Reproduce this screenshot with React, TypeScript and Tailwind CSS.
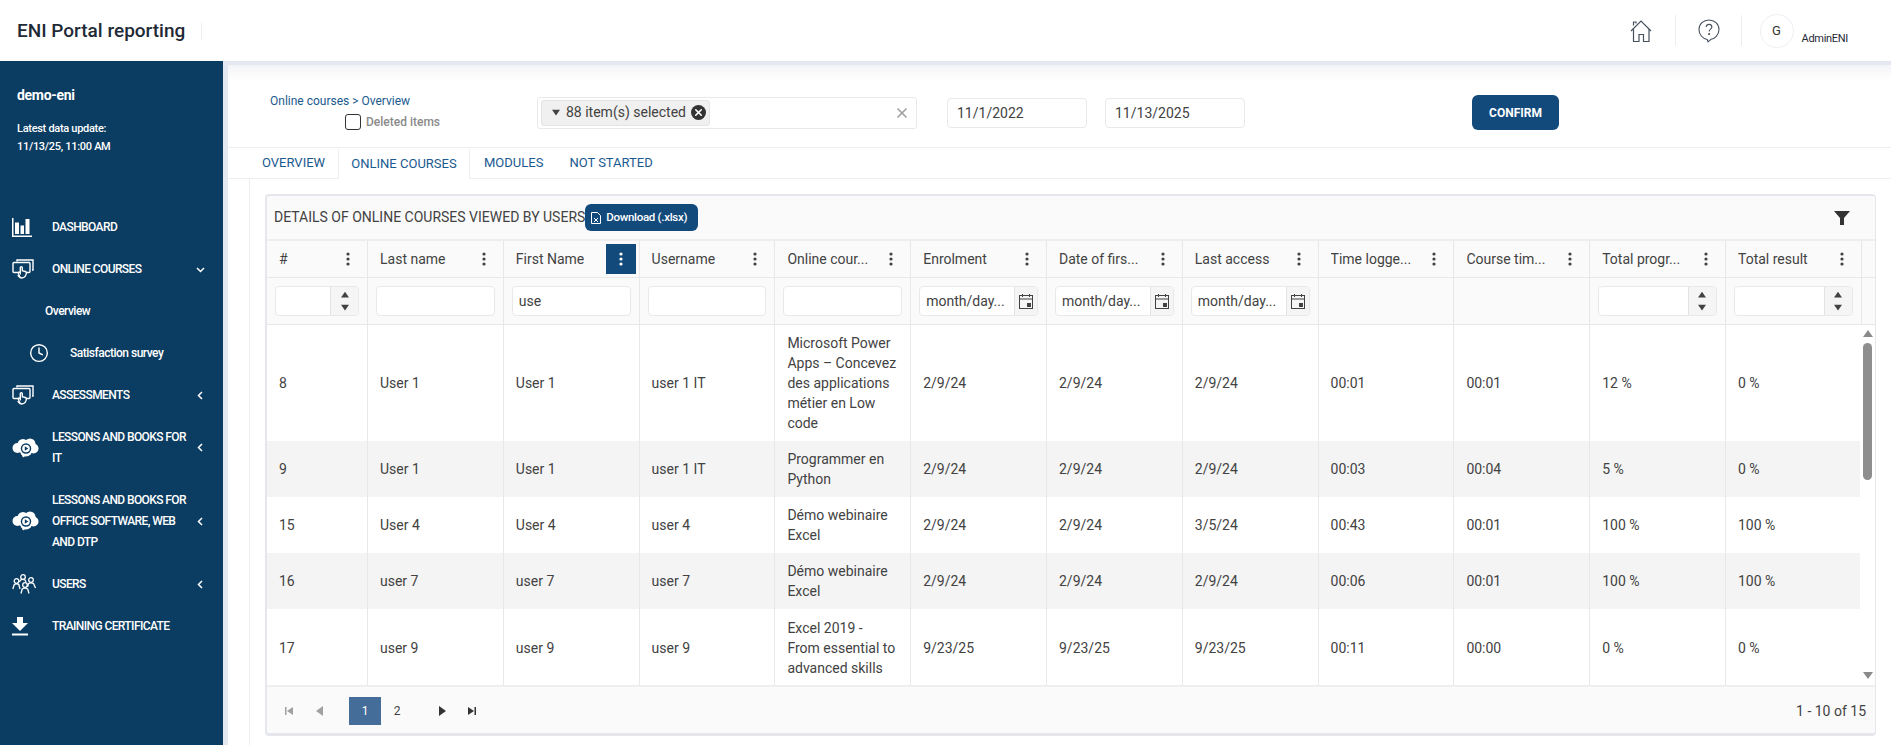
import { Clock, X } from 'lucide-react';

const columns = [
  { title: '#', filter: 'number', first: true },
  { title: 'Last name', filter: 'text' },
  { title: 'First Name', filter: 'text', value: 'use', active: true },
  { title: 'Username', filter: 'text' },
  { title: 'Online cour...', filter: 'text' },
  { title: 'Enrolment', filter: 'date' },
  { title: 'Date of firs...', filter: 'date' },
  { title: 'Last access', filter: 'date' },
  { title: 'Time logge...', filter: 'none' },
  { title: 'Course tim...', filter: 'none' },
  { title: 'Total progr...', filter: 'number' },
  { title: 'Total result', filter: 'number' },
];

const rows = [
  {
    height: 'h-[116px]',
    cells: ['8', 'User 1', 'User 1', 'user 1 IT', 'Microsoft Power Apps – Concevez des applications métier en Low code', '2/9/24', '2/9/24', '2/9/24', '00:01', '00:01', '12 %', '0 %'],
  },
  {
    height: 'h-[56px]',
    cells: ['9', 'User 1', 'User 1', 'user 1 IT', 'Programmer en Python', '2/9/24', '2/9/24', '2/9/24', '00:03', '00:04', '5 %', '0 %'],
  },
  {
    height: 'h-[56px]',
    cells: ['15', 'User 4', 'User 4', 'user 4', 'Démo webinaire Excel', '2/9/24', '2/9/24', '3/5/24', '00:43', '00:01', '100 %', '100 %'],
  },
  {
    height: 'h-[56px]',
    cells: ['16', 'user 7', 'user 7', 'user 7', 'Démo webinaire Excel', '2/9/24', '2/9/24', '2/9/24', '00:06', '00:01', '100 %', '100 %'],
  },
  {
    height: 'h-[77px]',
    cells: ['17', 'user 9', 'user 9', 'user 9', 'Excel 2019 - From essential to advanced skills', '9/23/25', '9/23/25', '9/23/25', '00:11', '00:00', '0 %', '0 %'],
  },
];

function DashboardIcon() {
  return (
    <svg width="20" height="19" viewBox="0 0 20 19" fill="white">
      <rect x="0" y="0" width="1.5" height="18.500" />
      <rect x="0" y="17.500" width="20" height="1.500" />
      <rect x="3" y="4.500" width="4" height="11.500" />
      <rect x="8.500" y="7.500" width="3.500" height="8.500" />
      <rect x="13.500" y="1" width="4" height="15" />
    </svg>
  );
}

function CourseIcon() {
  return (
    <svg width="22" height="20" viewBox="0 0 22 20" fill="none" stroke="white" strokeWidth="1.4">
      <path d="M5 2.500V1h16v10h-1" />
      <rect x="1" y="3.500" width="17" height="10" rx="1" fill="#0b3c61" />
      <path d="M7.500 17c-1-2-1.500-3-1-3.700.5-.5 1.200 0 1.800.7V8.500c0-1.200 2-1.200 2 0v3.200l3 .8c1 .3 1.200 1 1 2-.2 1.500-.8 2.500-1.800 3.500a4.500 4.500 0 0 1-6-1z" fill="#0b3c61" />
    </svg>
  );
}

function CloudEyeIcon() {
  return (
    <svg width="27" height="20" viewBox="0 0 27 20">
      <g fill="white">
        <circle cx="5.500" cy="10" r="5" />
        <circle cx="11" cy="6.500" r="5.500" />
        <circle cx="18" cy="6" r="5.500" />
        <circle cx="21.500" cy="10.500" r="5" />
        <circle cx="14" cy="12" r="6.500" />
        <path d="M9 15l2 4.500 3-2z" />
      </g>
      <circle cx="14" cy="10.500" r="5.200" fill="#0b3c61" />
      <circle cx="14" cy="10.500" r="3.800" fill="white" />
      <path d="M12.800 8.300v4.400l3.500-2.200z" fill="#0b3c61" />
    </svg>
  );
}

function UsersIcon() {
  return (
    <svg width="26" height="20" viewBox="0 0 26 20" fill="none" stroke="white" strokeWidth="1.3">
      <circle cx="11" cy="3" r="2.300" />
      <circle cx="4.500" cy="7" r="2.300" />
      <circle cx="19" cy="6" r="2.300" />
      <circle cx="13" cy="11" r="2.300" />
      <path d="M.8 15l1.500-4.500c1.500-1 3-1 4.500 0L8 15" />
      <path d="M7.500 8l1-2c1.500-.8 3-.8 4.500 0l1 2" />
      <path d="M15.500 13l1-3.500c1.500-.8 3.500-.8 5 0l2 4.500" />
      <path d="M9 19.500l1.200-4.500c1.700-1 3.800-1 5.500 0l1.300 4.500" />
    </svg>
  );
}

function DownloadIcon() {
  return (
    <svg width="16" height="19" viewBox="0 0 16 19" fill="white">
      <path d="M5 0h6v6h5l-8 8-8-8h5z" />
      <rect x="0" y="16.500" width="16" height="2" />
    </svg>
  );
}

function HomeIcon() {
  return (
    <svg width="22" height="24" viewBox="0 0 22 24" fill="none" stroke="#47525e" strokeWidth="1.2">
      <path d="M1 12L11 2l10 10" />
      <path d="M3.500 10v12.500h5.500v-7h4.500v7h5.500V10" />
      <path d="M3.500 6.500V3h2.500v1.500" />
    </svg>
  );
}

function HelpIcon() {
  return (
    <svg width="22" height="24" viewBox="0 0 22 24" fill="none" stroke="#47525e" strokeWidth="1.1">
      <path d="M11 1c5.500 0 10 4 10 9.500 0 5.500-4.500 9.500-8 9.800l-3 2.500-.8-2.300C4.500 19.500 1 15.500 1 10.500 1 5 5.500 1 11 1z" />
      <path d="M8.200 8c.2-3.500 5.500-3.500 5.700 0 0 2-2.800 2.200-2.800 4.500" />
      <circle cx="11.100" cy="15" r=".5" fill="#47525e" />
    </svg>
  );
}

function CalendarIcon() {
  return (
    <svg width="14" height="15" viewBox="0 0 14 15" fill="none" stroke="#424242">
      <rect x="0.500" y="1.500" width="13" height="13" />
      <path d="M.5 5h13M3.500 0v3M10.500 0v3" />
      <rect x="8" y="9" width="4" height="4" fill="#424242" stroke="none" />
    </svg>
  );
}

function MenuDots() {
  return (
    <svg width="4" height="14" viewBox="0 0 4 14" fill="currentColor">
      <circle cx="2" cy="2" r="1.600" />
      <circle cx="2" cy="7" r="1.600" />
      <circle cx="2" cy="12" r="1.600" />
    </svg>
  );
}

function Triangle({ direction, className }: { direction: 'up' | 'down' | 'left' | 'right'; className: string }) {
  const points = {
    up: '0,8 5,1 10,8',
    down: '0,1 10,1 5,8',
    left: '8,0 8,10 1,5',
    right: '1,0 1,10 8,5',
  }[direction];
  return (
    <svg width="10" height="10" viewBox="0 0 10 10" className={className}>
      <polygon points={points} fill="currentColor" />
    </svg>
  );
}

function NavItem({
  icon,
  label,
  chevron,
  className,
}: {
  icon: React.ReactNode;
  label: React.ReactNode;
  chevron?: 'down' | 'left';
  className: string;
}) {
  return (
    <div className={`flex items-center pl-[12px] ${className}`}>
      <div className="flex w-[40px] shrink-0 items-center">{icon}</div>
      <div className="w-[140px] shrink-0 text-[12px] font-medium leading-[21px] tracking-[-0.6px]">{label}</div>
      {chevron === 'down' && (
        <svg width="9" height="9" viewBox="0 0 9 9" fill="none" stroke="white" strokeWidth="1.500" className="ml-[4px]">
          <path d="M1 3l3.500 3.500L8 3" />
        </svg>
      )}
      {chevron === 'left' && (
        <svg width="9" height="9" viewBox="0 0 9 9" fill="none" stroke="white" strokeWidth="1.500" className="ml-[4px]">
          <path d="M6 1L2.500 4.500 6 8" />
        </svg>
      )}
    </div>
  );
}

function Spinner() {
  return (
    <div className="flex w-[28px] shrink-0 flex-col items-center justify-center gap-[5px] rounded-r-[4px] border-l border-[#e4e4e4] bg-[#f5f5f5] text-[#424242]">
      <Triangle direction="up" className="h-[8px] w-[8px]" />
      <Triangle direction="down" className="h-[8px] w-[8px]" />
    </div>
  );
}

function FilterCell({ col }: { col: (typeof columns)[number] }) {
  const frame = 'flex h-[30px] w-full overflow-hidden rounded-[4px] border border-[#e9e9e9] bg-white';
  if (col.filter === 'none') return null;
  if (col.filter === 'number') {
    return (
      <div className={frame}>
        <div className="flex-1" />
        <Spinner />
      </div>
    );
  }
  if (col.filter === 'date') {
    return (
      <div className={frame}>
        <div className="flex-1 truncate pl-[6px] text-[14px] leading-[28px] text-[#424242]">month/day...</div>
        <div className="flex w-[23px] shrink-0 items-center justify-center border-l border-[#e4e4e4] bg-[#f5f5f5]">
          <CalendarIcon />
        </div>
      </div>
    );
  }
  return <div className={`${frame} pl-[6px] text-[14px] leading-[28px] text-[#424242]`}>{col.value}</div>;
}

export default function App() {
  return (
    <div className="flex h-screen w-full flex-col overflow-hidden bg-[#e4e8f0] font-['Roboto',sans-serif] text-[#424242]">
      <header className="flex h-[61px] shrink-0 items-center bg-white">
        <div className="ml-[17px] w-[184px] text-[19px] font-medium leading-[24px] text-[#1f2a37]">ENI Portal reporting</div>
        <div className="mt-[1px] h-[17px] w-px bg-[#eeeeee]" />
        <div className="ml-auto flex items-center">
          <HomeIcon />
          <div className="ml-[23px] mr-[22px] h-[31px] w-px bg-[#eeeeee]" />
          <HelpIcon />
          <div className="ml-[21px] mr-[18px] h-[31px] w-px bg-[#eeeeee]" />
          <div className="flex h-[34px] w-[34px] items-center justify-center rounded-full border border-[#eeeff5] text-[13px] text-[#333333]">G</div>
          <div className="ml-[8px] mr-[43px] mt-[16px] text-[11px] leading-[16px] tracking-[-0.3px] text-[#1f2a37]">AdminENI</div>
        </div>
      </header>

      <div className="flex min-h-0 flex-1">
        <aside className="w-[223px] shrink-0 bg-[#0b3c61] text-white">
          <div className="pl-[17px] pt-[24px]">
            <div className="text-[14px] font-bold leading-[20px] tracking-[-0.3px]">demo-eni</div>
            <div className="mt-[15px] text-[11px] font-medium leading-[18px] tracking-[-0.3px]">
              <div>Latest data update:</div>
              <div>11/13/25, 11:00 AM</div>
            </div>
          </div>
          <div className="mt-[50px]">
            <NavItem icon={<DashboardIcon />} label="DASHBOARD" className="h-[42px]" />
            <NavItem icon={<CourseIcon />} label="ONLINE COURSES" chevron="down" className="h-[42px]" />
            <div className="flex h-[42px] items-center pl-[45px] text-[12px] font-medium tracking-[-0.5px]">Overview</div>
            <div className="flex h-[42px] items-center pl-[29px] text-[12px] font-medium tracking-[-0.5px]">
              <Clock size={20} strokeWidth={1.700} className="mr-[21px]" />
              Satisfaction survey
            </div>
            <NavItem icon={<CourseIcon />} label="ASSESSMENTS" chevron="left" className="h-[42px]" />
            <NavItem icon={<CloudEyeIcon />} label="LESSONS AND BOOKS FOR IT" chevron="left" className="h-[63px]" />
            <NavItem icon={<CloudEyeIcon />} label="LESSONS AND BOOKS FOR OFFICE SOFTWARE, WEB AND DTP" chevron="left" className="h-[84px]" />
            <NavItem icon={<UsersIcon />} label="USERS" chevron="left" className="h-[42px]" />
            <NavItem icon={<DownloadIcon />} label="TRAINING CERTIFICATE" className="h-[42px]" />
          </div>
        </aside>

        <main className="ml-[5px] mt-[4px] flex min-w-0 flex-1 flex-col rounded-tl-[6px] bg-white">
          <div className="flex h-[82px] shrink-0 items-start bg-gradient-to-b from-[#f3f4f6] to-white to-[20%]">
            <div className="ml-[42px] w-[267px] pt-[28px]">
              <div className="text-[12px] leading-[16px] text-[#1a5a8f]">Online courses &gt; Overview</div>
              <div className="ml-[75px] mt-[4px] flex items-center">
                <div className="h-[16px] w-[16px] rounded-[3px] border border-[#333333]" />
                <span className="ml-[5px] text-[12px] font-medium text-[#8a8a8a]">Deleted items</span>
              </div>
            </div>
            <div className="mt-[32px] flex h-[32px] w-[380px] items-center rounded-[3px] border border-[#e9e9e9] pl-[3px] pr-[6px]">
              <div className="flex h-[26px] items-center rounded-[3px] border border-[#e4e4e4] bg-[#f0f0f0] pb-[1px] pl-[10px] pr-[3px] text-[14px] text-[#424242]">
                <Triangle direction="down" className="mr-[6px] h-[8px] w-[8px] text-[#424242]" />
                88 item(s) selected
                <span className="ml-[5px] flex h-[15px] w-[15px] items-center justify-center rounded-full bg-[#333333]">
                  <X size={11} strokeWidth={3.500} className="text-white" />
                </span>
              </div>
              <X size={16} strokeWidth={2.500} className="ml-auto text-[#a0a0a0]" />
            </div>
            <div className="ml-[30px] mt-[33px] flex h-[30px] w-[140px] items-center rounded-[4px] border border-[#e9e9e9] pl-[9px] text-[14px] text-[#424242]">11/1/2022</div>
            <div className="ml-[18px] mt-[33px] flex h-[30px] w-[140px] items-center rounded-[4px] border border-[#e9e9e9] pl-[9px] text-[14px] text-[#424242]">11/13/2025</div>
            <button className="ml-[227px] mt-[30px] flex h-[35px] w-[87px] items-center justify-center rounded-[6px] bg-[#134a7c] text-[12px] font-bold text-white">CONFIRM</button>
          </div>

          <div className="flex h-[32px] shrink-0 items-stretch border-y border-[#eeeeee] pl-[21px] text-[13px] text-[#1a5a8f]">
            <div className="flex w-[89px] items-center pl-[13px]">OVERVIEW</div>
            <div className="-mb-px flex w-[132px] items-center justify-center rounded-t-[3px] border-x border-[#eeeeee] bg-white">ONLINE COURSES</div>
            <div className="flex items-center pl-[14px]">MODULES</div>
            <div className="flex items-center pl-[26px]">NOT STARTED</div>
          </div>

          <div className="ml-[21px] min-h-0 flex-1 border-l border-[#eeeeee] pl-[15px] pr-[15px] pt-[15px]">
            <div className="h-[542px] overflow-hidden rounded-[4px] border-2 border-b-[3px] border-r border-[#e5e7ec] bg-[#fafafa]">
              <div className="flex h-[45px] items-center border-b-2 border-[#eeeeee] pl-[7px] pr-[25px]">
                <span className="text-[14px]">DETAILS OF ONLINE COURSES VIEWED BY USERS</span>
                <div className="flex h-[27px] items-center rounded-[6px] bg-[#134a7c] pl-[6px] pr-[11px] text-[11.500px] font-medium tracking-[-0.3px] text-white">
                  <svg width="10" height="12" viewBox="0 0 10 12" fill="none" stroke="white" className="mr-[5px]">
                    <path d="M.5.5h6l3 3v8h-9zM3 6l4 4M7 6l-4 4" />
                  </svg>
                  Download (.xlsx)
                </div>
                <svg width="16" height="16" viewBox="0 0 16 16" fill="#333333" className="ml-auto">
                  <path d="M0 1h16L10 8v7l-4 0V8z" />
                </svg>
              </div>

              <div className="flex h-[37px] border-b border-[#e8e8e8]">
                {columns.map((col) => (
                  <div
                    key={col.title}
                    className={`flex items-center border-r border-[#e8e8e8] pl-[12px] text-[14px] ${col.first ? 'w-[101px]' : 'w-[135.800px]'}`}
                  >
                    <span className="flex-1 truncate">{col.title}</span>
                    {col.active ? (
                      <span className="mr-[3px] flex h-[30px] w-[30px] items-center justify-center bg-[#134a7c] text-white">
                        <MenuDots />
                      </span>
                    ) : (
                      <span className="mr-[14px] flex w-[10px] justify-center">
                        <MenuDots />
                      </span>
                    )}
                  </div>
                ))}
              </div>

              <div className="flex h-[47px] border-b border-[#e8e8e8]">
                {columns.map((col) => (
                  <div
                    key={col.title}
                    className={`flex items-center border-r border-[#e8e8e8] pl-[8px] pr-[8px] ${col.first ? 'w-[101px]' : 'w-[135.800px]'}`}
                  >
                    <FilterCell col={col} />
                  </div>
                ))}
              </div>

              <div className="relative h-[362px] overflow-hidden border-b-2 border-[#eeeeee] bg-white">
                {rows.map((row, i) => (
                  <div key={i} className={`flex w-fit ${row.height} ${i % 2 === 1 ? 'bg-[#f4f4f4]' : 'bg-white'}`}>
                    {row.cells.map((cell, j) => (
                      <div
                        key={j}
                        className={`flex items-center border-r border-[#e8e8e8] px-[12px] text-[14px] leading-[20px] ${j === 0 ? 'w-[101px]' : 'w-[135.800px]'}`}
                      >
                        {cell}
                      </div>
                    ))}
                  </div>
                ))}
                <div className="absolute bottom-0 right-0 top-0 flex w-[15px] flex-col items-center bg-white text-[#8a8a8a]">
                  <Triangle direction="up" className="mt-[4px]" />
                  <div className="mt-[4px] h-[137px] w-[9px] rounded-[5px] bg-[#8e8e8e]" />
                  <Triangle direction="down" className="mb-[4px] mt-auto" />
                </div>
              </div>

              <div className="flex h-[48px] items-center pl-[17px] pr-[9px] text-[14px]">
                <svg width="10" height="10" viewBox="0 0 10 10" fill="#a0a0a0">
                  <path d="M1 1h1.500v8H1zM9 1v8L3 5z" />
                </svg>
                <Triangle direction="left" className="ml-[21px] text-[#a0a0a0]" />
                <div className="ml-[24px] flex h-[28px] w-[32px] items-center justify-center bg-[#446e99] text-[12px] text-white">1</div>
                <div className="flex h-[28px] w-[32px] items-center justify-center text-[12px]">2</div>
                <Triangle direction="right" className="ml-[25px] text-[#333333]" />
                <svg width="10" height="10" viewBox="0 0 10 10" fill="#333333" className="ml-[19px]">
                  <path d="M1 1l6 4-6 4zM7.500 1H9v8H7.500z" />
                </svg>
                <span className="ml-auto">1 - 10 of 15</span>
              </div>
            </div>
          </div>
        </main>
      </div>
    </div>
  );
}
